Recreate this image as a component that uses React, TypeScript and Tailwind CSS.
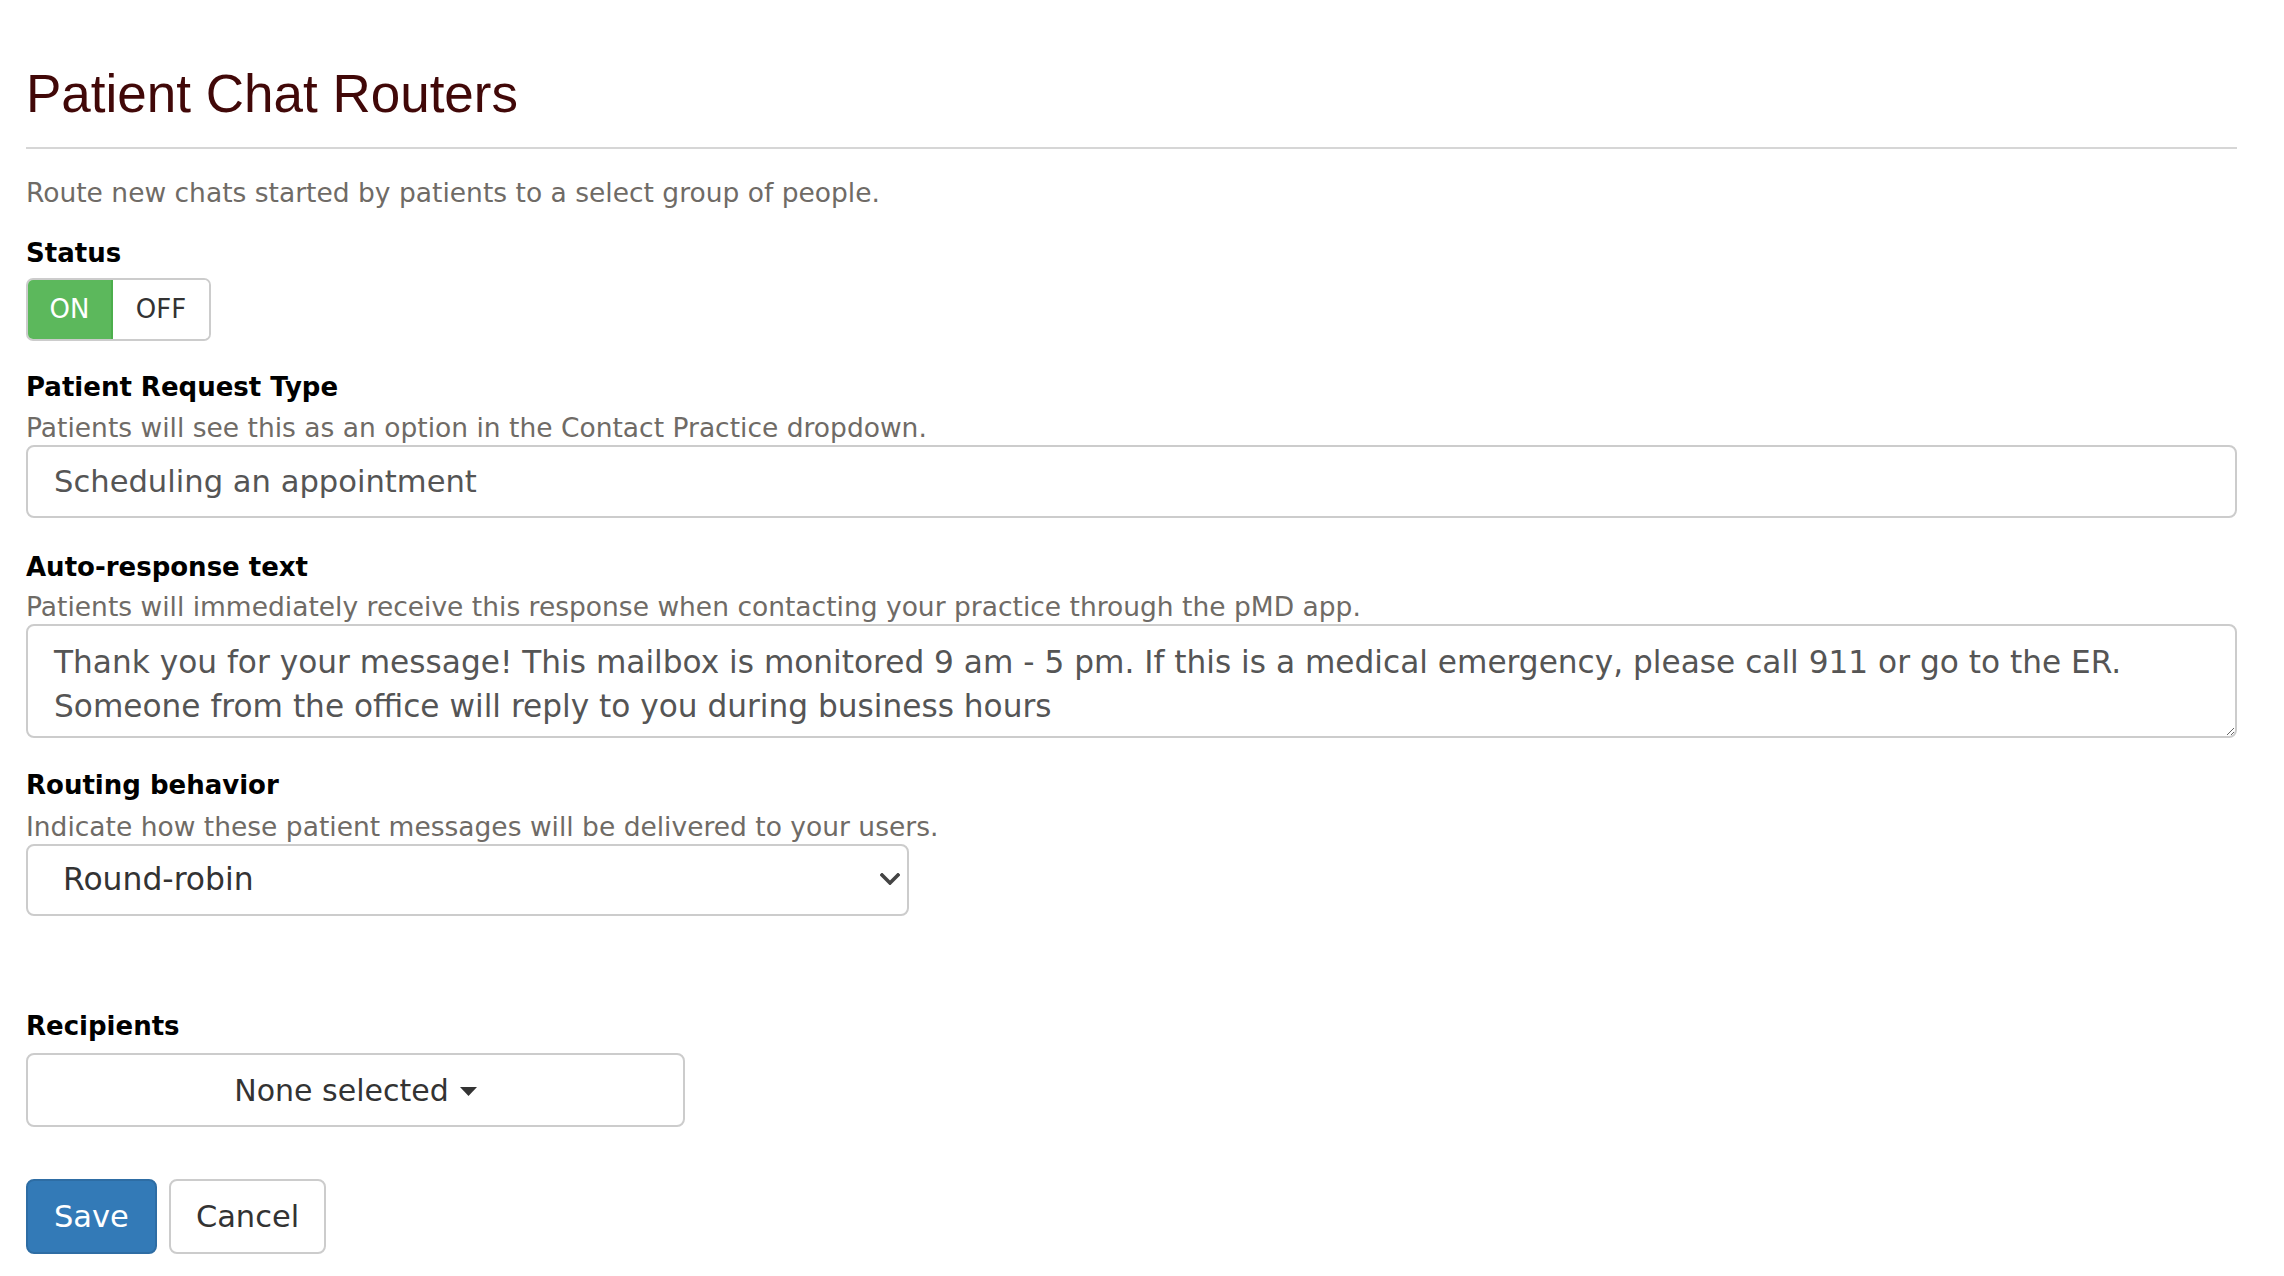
import React from 'react';

const FONT = { fontFamily: '"DejaVu Sans", Verdana, sans-serif' };

const Label: React.FC<{ children: React.ReactNode; className?: string }> = ({ children, className = '' }) => (
  <div className={`text-[26px] leading-[34px] font-bold text-black ${className}`}>{children}</div>
);

const Help: React.FC<{ children: React.ReactNode }> = ({ children }) => (
  <div className="text-[26.5px] leading-[34px] text-[#6f6b66]">{children}</div>
);

const App: React.FC = () => {
  return (
    <div className="min-h-screen bg-white pl-[26px] pr-[47px] pt-[65px] pb-10" style={FONT}>
      <h1
        className="text-[53px] leading-[58px] text-[#410808]"
        style={{ fontFamily: '"Liberation Sans", Arial, sans-serif' }}
      >
        Patient Chat Routers
      </h1>
      <div className="mt-[24px] border-t-2 border-[#d6d6d6]" />

      <div className="mt-[27px] text-[26.5px] leading-[34px] text-[#6f6b66]">
        Route new chats started by patients to a select group of people.
      </div>

      <Label className="mt-[26px]">Status</Label>
      <div className="mt-[8px] flex h-[63px] w-[185px] overflow-hidden rounded-[7px] border-2 border-[#cccccc] text-[26px]">
        <button className="flex w-[85px] items-center justify-center border-r-2 border-[#4cae4c] bg-[#5cb85c] text-white">
          ON
        </button>
        <button className="flex flex-1 items-center justify-center bg-white text-[#333333]">OFF</button>
      </div>

      <Label className="mt-[29px] mb-[7px]">Patient Request Type</Label>
      <Help>Patients will see this as an option in the Contact Practice dropdown.</Help>
      <input
        readOnly
        defaultValue="Scheduling an appointment"
        className="block h-[73px] w-full rounded-[8px] border-2 border-[#cccccc] bg-white pl-[26px] text-[30.6px] text-[#555555] outline-none"
        style={FONT}
      />

      <Label className="mt-[32px] mb-[6px]">Auto-response text</Label>
      <Help>Patients will immediately receive this response when contacting your practice through the pMD app.</Help>
      <textarea
        readOnly
        defaultValue={
          'Thank you for your message! This mailbox is monitored 9 am - 5 pm. If this is a medical emergency, please call 911 or go to the ER. Someone from the office will reply to you during business hours'
        }
        className="block h-[114px] w-full rounded-[8px] border-2 border-[#cccccc] bg-white pt-[14px] pb-[8px] pl-[26px] pr-[26px] text-[31.2px] leading-[44px] text-[#555555] outline-none"
        style={FONT}
      />

      <Label className="mt-[30px] mb-[8px]">Routing behavior</Label>
      <Help>Indicate how these patient messages will be delivered to your users.</Help>
      <div className="relative w-[883px]">
        <select
          defaultValue="rr"
          className="block h-[72px] w-full appearance-none rounded-[8px] border-2 border-[#cccccc] bg-white pl-[35px] text-[31.4px] text-[#333333] outline-none"
          style={FONT}
        >
          <option value="rr">Round-robin</option>
          <option value="all">All recipients</option>
        </select>
        <svg
          className="pointer-events-none absolute right-[9px] top-[29px] h-[12px] w-[20px]"
          viewBox="0 0 20 12"
          fill="none"
        >
          <path d="M2 2l8 8 8-8" stroke="#444444" strokeWidth="3.6" strokeLinecap="square" />
        </svg>
      </div>

      <Label className="mt-[93px] mb-[10px]">Recipients</Label>
      <button className="flex h-[74px] w-[659px] items-center justify-center gap-[11px] rounded-[8px] border-2 border-[#cccccc] bg-white text-[30px] text-[#333333]">
        <span>None selected</span>
        <svg className="mt-[2px] h-[9px] w-[17px]" viewBox="0 0 17 9">
          <path d="M0 0h17L8.5 9z" fill="#333333" />
        </svg>
      </button>

      <div className="mt-[52px] flex gap-[12px]">
        <button className="h-[75px] rounded-[8px] border-2 border-[#2e6da4] bg-[#337ab7] px-[26px] text-[30.5px] text-white">
          Save
        </button>
        <button className="h-[75px] rounded-[8px] border-2 border-[#cccccc] bg-white px-[25px] text-[30.5px] text-[#333333]">
          Cancel
        </button>
      </div>
    </div>
  );
};

export default App;
